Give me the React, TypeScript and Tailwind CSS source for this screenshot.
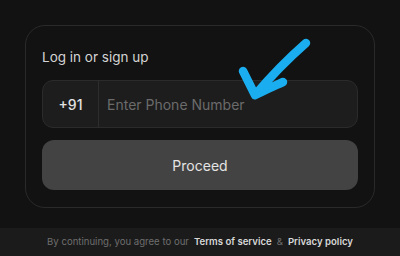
export default function App() {
  return (
    <div className="flex h-[256px] w-[400px] flex-col overflow-hidden bg-[#121212] font-['Inter','Liberation_Sans',sans-serif]">
      <div className="relative flex-1 px-[25px] pt-[25px]">
        <div className="h-[183px] rounded-[20px] border border-[#2a2a2a] px-[16px] pt-[21px]">
          <div className="text-[13.5px] leading-[20px] text-[#d4d4d4]">Log in or sign up</div>
          <div className="mt-[13px] flex h-[48px] rounded-[11px] border border-[#2b2b2b] bg-[#1d1d1d]">
            <div className="flex w-[56px] items-center justify-center border-r border-[#2d2d2d] text-[14px] font-medium text-[#e2e2e2]">
              +91
            </div>
            <div className="flex flex-1 items-center pl-[8px] text-[14px] text-[#6b6b6b]">Enter Phone Number</div>
          </div>
          <button className="mt-[12px] flex h-[50px] w-full items-center justify-center rounded-[12px] bg-[#434343] text-[14px] text-[#e4e4e4]">
            Proceed
          </button>
        </div>
        <svg className="absolute left-0 top-0" width="400" height="228" viewBox="0 0 400 228">
          <path
            d="M306 43 C290 57 272 75 255 95 M243 71 C248 81 252 89 255 95 C264 91 274 86 283 82"
            fill="none"
            stroke="#1aaef0"
            strokeWidth="8.5"
            strokeLinecap="round"
            strokeLinejoin="round"
          />
        </svg>
      </div>
      <div className="flex h-[28px] items-center justify-center gap-[5px] bg-[#1b1b1b] text-[9.6px]">
        <span className="text-[#6e6e6e]">By continuing, you agree to our</span>
        <span className="font-semibold text-[#d8d8d8]">Terms of service</span>
        <span className="text-[#6e6e6e]">&amp;</span>
        <span className="font-semibold text-[#d8d8d8]">Privacy policy</span>
      </div>
    </div>
  );
}
